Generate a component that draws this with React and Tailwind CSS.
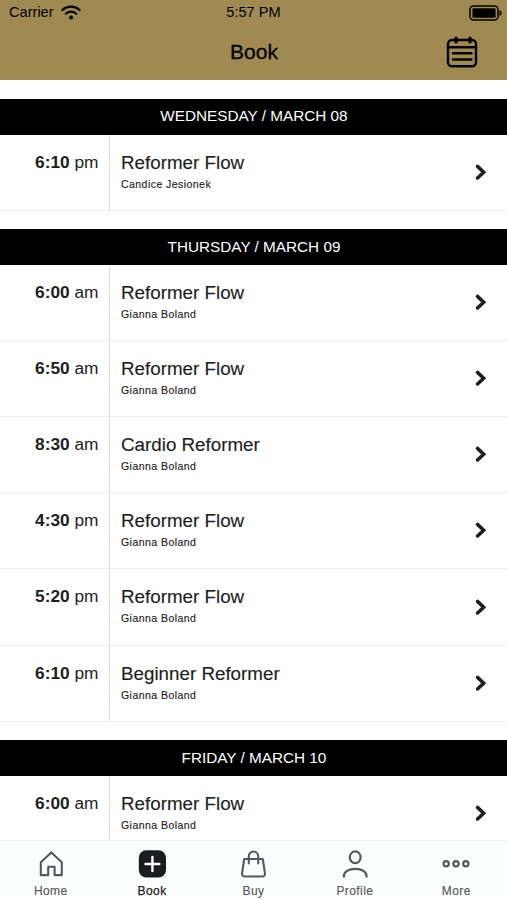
import React from 'react';

const DAYS = [
    {
        label: 'WEDNESDAY / MARCH 08',
        classes: [{ time: '6:10', period: 'pm', name: 'Reformer Flow', coach: 'Candice Jesionek' }],
    },
    {
        label: 'THURSDAY / MARCH 09',
        classes: [
            { time: '6:00', period: 'am', name: 'Reformer Flow', coach: 'Gianna Boland' },
            { time: '6:50', period: 'am', name: 'Reformer Flow', coach: 'Gianna Boland' },
            { time: '8:30', period: 'am', name: 'Cardio Reformer', coach: 'Gianna Boland' },
            { time: '4:30', period: 'pm', name: 'Reformer Flow', coach: 'Gianna Boland' },
            { time: '5:20', period: 'pm', name: 'Reformer Flow', coach: 'Gianna Boland' },
            { time: '6:10', period: 'pm', name: 'Beginner Reformer', coach: 'Gianna Boland' },
        ],
    },
    {
        label: 'FRIDAY / MARCH 10',
        classes: [{ time: '6:00', period: 'am', name: 'Reformer Flow', coach: 'Gianna Boland' }],
    },
];

const TABS = [
    { label: 'Home', Icon: HomeIcon },
    { label: 'Book', Icon: BookIcon, active: true },
    { label: 'Buy', Icon: BagIcon },
    { label: 'Profile', Icon: ProfileIcon },
    { label: 'More', Icon: MoreIcon },
];

function HomeIcon() {
    return (
        <svg width="30" height="30" viewBox="0 0 30 30" fill="none" stroke="currentColor" strokeWidth="2.1" strokeLinejoin="round">
            <path d="M4.8 13.2 15.3 3.4l10.5 9.8v12.9h-7.2v-8.4h-6.4v8.4H4.8z" />
        </svg>
    );
}

function BookIcon() {
    return (
        <svg width="30" height="30" viewBox="0 0 30 30">
            <rect x="1.8" y="1.3" width="27.2" height="27.2" rx="7.5" fill="#1b1c1f" />
            <path d="M15.4 8v14M8.4 15h14" stroke="#fff" strokeWidth="2.4" strokeLinecap="round" />
        </svg>
    );
}

function BagIcon() {
    return (
        <svg width="30" height="30" viewBox="0 0 30 30" fill="none" stroke="currentColor" strokeWidth="2.1" strokeLinecap="round" strokeLinejoin="round">
            <path d="M6.2 10h18.6l2.2 14.5a2.7 2.7 0 0 1-2.7 3H6.7a2.7 2.7 0 0 1-2.7-3z" />
            <path d="M10.8 14.5V7.2a4.7 4.7 0 0 1 9.4 0v7.3" />
        </svg>
    );
}

function ProfileIcon() {
    return (
        <svg width="30" height="30" viewBox="0 0 30 30" fill="none" stroke="currentColor" strokeWidth="2.2">
            <ellipse cx="15.2" cy="8.3" rx="5.4" ry="5.9" />
            <path d="M3.9 28.5v-1.3c0-4.3 4.5-7.3 11.3-7.3s11.3 3 11.3 7.3v1.3" />
        </svg>
    );
}

function MoreIcon() {
    return (
        <svg width="30" height="30" viewBox="0 0 30 30" fill="none" stroke="currentColor" strokeWidth="2.2">
            <circle cx="5.2" cy="14.8" r="2.6" />
            <circle cx="15" cy="14.8" r="2.6" />
            <circle cx="24.8" cy="14.8" r="2.6" />
        </svg>
    );
}

function WifiIcon() {
    return (
        <svg width="20" height="15" viewBox="0 0 20 15" fill="none" stroke="#000" strokeWidth="2.2" strokeLinecap="round">
            <path d="M1.4 5a12.7 12.7 0 0 1 17.2 0" />
            <path d="M4.8 8.7a7.7 7.7 0 0 1 10.4 0" />
            <circle cx="10" cy="12.5" r="2" fill="#000" stroke="none" />
        </svg>
    );
}

function BatteryIcon() {
    return (
        <svg width="34" height="16" viewBox="0 0 34 16">
            <rect x="1" y="1" width="28" height="14" rx="3.5" fill="none" stroke="#000" strokeWidth="1.5" />
            <rect x="3.4" y="3.3" width="23.2" height="9.4" rx="1.3" fill="#000" />
            <path d="M30.5 5.2c1.3.3 2 1.4 2 2.8s-.7 2.5-2 2.8z" fill="#000" />
        </svg>
    );
}

function CalendarIcon() {
    return (
        <svg width="32" height="32" viewBox="0 0 32 32" fill="none" stroke="#000" strokeWidth="2.4" strokeLinecap="round">
            <rect x="2" y="4" width="28" height="26.2" rx="4" />
            <path d="M2 11.2h28M7 17.3h18.500M7 23.5h18.500" />
            <path d="M10 2v4M24 2v4" strokeWidth="3.2" />
        </svg>
    );
}

function ClassRow({ item }) {
    return (
        <div className="flex h-[76.1px] border-b border-[#ebedee] text-[#1d1e20]">
            <div className="w-[110px] border-r border-[#d9dee2] pt-[17px] pr-[10.5px] text-right text-[17.3px] leading-5">
                <strong>{item.time}</strong> {item.period}
            </div>
            <div className="flex-1 pt-[16px] pl-[11px]">
                <div className="text-[18.8px] leading-6 [-webkit-text-stroke:0.15px_#1d1e20]">{item.name}</div>
                <div className="mt-px text-[10.5px] leading-4 tracking-[0.45px] [-webkit-text-stroke:0.15px_#1d1e20]">{item.coach}</div>
            </div>
            <div className="flex items-center pr-[19.5px] pb-px">
                <svg width="14" height="18" viewBox="0 0 14 18" fill="none" stroke="currentColor" strokeWidth="3.5" strokeLinecap="round">
                    <path d="M3.5 3.4 9.7 9.2l-6.2 5.8" />
                </svg>
            </div>
        </div>
    );
}

export default function App() {
    return (
        <div className="flex h-[900px] w-[507px] flex-col overflow-hidden bg-white font-['Liberation_Sans',Arial,sans-serif]">
            <header className="h-[80px] shrink-0 bg-[#9f8a52] text-black">
                {/* Status bar */}
                <div className="grid h-[25px] grid-cols-[1fr_auto_1fr] items-center px-1 text-[14.6px]">
                    <div className="flex items-center gap-[7px] pl-[5px]">
                        Carrier <WifiIcon />
                    </div>
                    <div>5:57 PM</div>
                    <div className="flex justify-end">
                        <BatteryIcon />
                    </div>
                </div>
                {/* Title */}
                <div className="grid h-[54px] grid-cols-3 items-center">
                    <h1 className="col-start-2 pl-px text-center text-[21px] leading-6 [-webkit-text-stroke:0.3px_#000]">Book</h1>
                    <div className="flex justify-end pr-[29px]">
                        <CalendarIcon />
                    </div>
                </div>
            </header>

            <main className="min-h-0 flex-1 overflow-hidden">
                {DAYS.map((day) => (
                    <section key={day.label} className="pt-[18.5px]">
                        <h2 className="flex h-[36px] items-center justify-center bg-black pl-px text-[15.3px] text-white">{day.label}</h2>
                        {day.classes.map((item) => (
                            <ClassRow key={item.time + item.period} item={item} />
                        ))}
                    </section>
                ))}
            </main>

            <nav className="grid h-[60px] shrink-0 grid-cols-5 border-t border-[#f0f1f1] bg-[#fdfefe]">
                {TABS.map(({ label, Icon, active }) => (
                    <div
                        key={label}
                        className={`flex flex-col items-center pt-[8px] text-[12px] tracking-[0.4px] ${active ? 'text-[#1b1c1f] [-webkit-text-stroke:0.25px_#1b1c1f]' : 'text-[#55585c] [-webkit-text-stroke:0.15px_#55585c]'}`}
                    >
                        <Icon />
                        <span className="mt-[4px] leading-4">{label}</span>
                    </div>
                ))}
            </nav>
        </div>
    );
}
